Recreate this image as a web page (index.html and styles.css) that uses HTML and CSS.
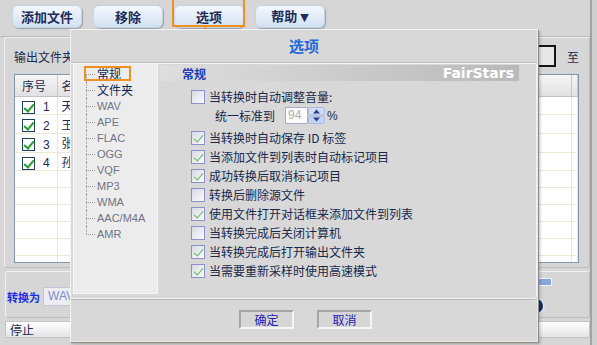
FILE: index.html
```html
<!DOCTYPE html>
<html>
<head>
  <meta charset="utf-8">
  <title>选项</title>
  <link rel="stylesheet" href="styles.css">
</head>
<body>
  <div class="app">
    <div class="toolbar">
      <button class="tb-btn">添加文件</button>
      <button class="tb-btn">移除</button>
      <button class="tb-btn">选项</button>
      <button class="tb-btn">帮助 <span class="caret">▼</span></button>
    </div>

    <div class="out-panel">
      <div class="out-row">
        <span>输出文件夹</span>
        <span class="spacer"></span>
        <span class="out-box"></span>
        <span>至</span>
      </div>
      <div class="list">
        <table>
          <colgroup>
            <col style="width:42px">
            <col>
            <col style="width:6px">
          </colgroup>
          <thead>
            <tr><th>序号</th><th class="name">名称</th><th></th></tr>
          </thead>
          <tbody>
            <tr><td><span class="lcb"></span><span class="num">1</span></td><td class="name">天使</td><td></td></tr>
            <tr><td><span class="lcb"></span><span class="num">2</span></td><td class="name">王菲</td><td></td></tr>
            <tr><td><span class="lcb"></span><span class="num">3</span></td><td class="name">张学友</td><td></td></tr>
            <tr><td><span class="lcb"></span><span class="num">4</span></td><td class="name">孙燕姿</td><td></td></tr>
            <tr><td></td><td></td><td></td></tr>
            <tr><td></td><td></td><td></td></tr>
            <tr><td></td><td></td><td></td></tr>
            <tr><td></td><td></td><td></td></tr>
            <tr><td></td><td></td><td></td></tr>
            <tr><td></td><td></td><td></td></tr>
          </tbody>
        </table>
      </div>
    </div>

    <div class="convert-panel">
      <span class="convert-label">转换为</span>
      <span class="format-box">WAV</span>
      <div class="conv-right">
        <span class="progress"></span>
        <span class="round-btn"></span>
      </div>
    </div>

    <div class="statusbar">停止</div>
  </div>

  <div class="mark-btn"></div>
  <svg class="arrow" width="30" height="40" viewBox="195 22 30 40">
    <path d="M205 27 L212 56" stroke="#f08c20" stroke-width="2" fill="none"/>
    <path d="M207.5 49 L212 57 L217 48" stroke="#f08c20" stroke-width="2" fill="none"/>
  </svg>

  <div class="dialog">
    <div class="dlg-title">选项</div>

    <div class="dlg-body">
      <div class="tree">
        <ul>
          <li class="zh"><span class="mark-item"></span>常规</li>
          <li class="zh">文件夹</li>
          <li>WAV</li>
          <li>APE</li>
          <li>FLAC</li>
          <li>OGG</li>
          <li>VQF</li>
          <li>MP3</li>
          <li>WMA</li>
          <li>AAC/M4A</li>
          <li>AMR</li>
        </ul>
      </div>

      <div class="pane">
        <div class="pane-head">
          <span class="pane-title">常规</span>
          <span class="brand">FairStars</span>
        </div>
        <div class="opts">
          <div class="opt"><span class="cb"></span>当转换时自动调整音量:</div>
          <div class="opt sub">
            统一标准到
            <span class="num-input">94</span>
            <svg class="spin" width="17" height="17" viewBox="0 0 17 17">
              <rect x="0.5" y="0.5" width="16" height="7.5" rx="2" fill="#cfdcf5" stroke="#a9b8de"/>
              <rect x="0.5" y="9" width="16" height="7.5" rx="2" fill="#c3d3f2" stroke="#a9b8de"/>
              <path d="M5 6.5h7l-3.5-4z" fill="#2d3c90"/>
              <path d="M5 10.5h7l-3.5 4z" fill="#2d3c90"/>
            </svg>
            <span class="pct">%</span>
          </div>
          <div class="opt"><span class="cb on"></span>当转换时自动保存 ID 标签</div>
          <div class="opt"><span class="cb on"></span>当添加文件到列表时自动标记项目</div>
          <div class="opt"><span class="cb on"></span>成功转换后取消标记项目</div>
          <div class="opt"><span class="cb"></span>转换后删除源文件</div>
          <div class="opt"><span class="cb on"></span>使用文件打开对话框来添加文件到列表</div>
          <div class="opt"><span class="cb"></span>当转换完成后关闭计算机</div>
          <div class="opt"><span class="cb on"></span>当转换完成后打开输出文件夹</div>
          <div class="opt"><span class="cb on"></span>当需要重新采样时使用高速模式</div>
        </div>
      </div>
    </div>

    <div class="dlg-foot">
      <button class="dlg-btn">确定</button>
      <button class="dlg-btn">取消</button>
    </div>
  </div>
</body>
</html>
```

FILE: styles.css
```css
* {
  box-sizing: border-box;
}
body {
  margin: 0;
  width: 597px;
  height: 345px;
  overflow: hidden;
  position: relative;
  background-color: #cecece;
  font-family: "Liberation Sans", "Noto Sans CJK SC", sans-serif;
  font-size: 12px;
  color: #1b2a4e;
}
button {
  font-family: "Noto Sans CJK SC", sans-serif;
  cursor: pointer;
}

/* main window */
.app {
  width: 592px;
  height: 345px;
  display: flex;
  flex-direction: column;
  background-color: #d6d6d6;
  border-right: 2px solid #a3a3a3;
}
.toolbar {
  height: 37px;
  flex: none;
  display: flex;
  gap: 11px;
  padding: 5px 0 0 12px;
  border-bottom: 1px solid #b9b9b9;
}
.tb-btn {
  width: 70px;
  height: 23px;
  padding: 0;
  border: 1px solid #c6d3e2;
  border-radius: 6px;
  background: linear-gradient(#f3f8fd, #d2e1f2);
  box-shadow: 1px 1px 1px #98a2ae;
  font-size: 13px;
  font-weight: bold;
  color: #1c2b57;
  line-height: 20px;
}
.caret {
  font-family: "DejaVu Sans", sans-serif;
  font-size: 11px;
}
.mark-btn {
  position: absolute;
  left: 172px;
  top: -2px;
  width: 73px;
  height: 29px;
  border: 2px solid #f0901f;
}
.arrow {
  position: absolute;
  left: 195px;
  top: 22px;
}

.out-panel {
  height: 231px;
  flex: none;
  margin: 0 0 3px 4px;
  padding: 0 10px 0 9px;
  border: 1px solid #f0f0f0;
  border-right-color: #bdbdbd;
  border-bottom-color: #bdbdbd;
  border-radius: 3px;
}
.out-row {
  height: 36px;
  display: flex;
  align-items: center;
  font-family: "Noto Sans CJK SC", sans-serif;
}
.spacer {
  flex: 1;
}
.out-box {
  width: 19px;
  height: 22px;
  margin-right: 11px;
  border: 2px solid #151515;
  background-color: #e8e8e8;
}
.list {
  height: 189px;
  border: 1px solid #8196ad;
  background-color: #fff;
  overflow: hidden;
}
table {
  width: 100%;
  border-collapse: collapse;
  table-layout: fixed;
}
th {
  height: 21px;
  padding: 0 0 0 7px;
  background: linear-gradient(#f6f6f6, #e1e1e1);
  border-right: 1px solid #c9c9c9;
  border-bottom: 1px solid #c2c2c2;
  font-family: "Noto Sans CJK SC", sans-serif;
  font-weight: normal;
  text-align: left;
}
td {
  height: 17px;
  padding: 0 0 0 7px;
  border-right: 1px solid #ece8d6;
  border-bottom: 1px solid #ece8d6;
  font-family: "Noto Sans CJK SC", sans-serif;
  white-space: nowrap;
  overflow: hidden;
}
th.name, td.name {
  padding-left: 4px;
}
.lcb {
  display: inline-block;
  vertical-align: middle;
  position: relative;
  width: 13px;
  height: 13px;
  border: 1px solid #20405f;
  background-color: #fff;
}
.lcb::after {
  content: "";
  position: absolute;
  left: 3px;
  top: 0;
  width: 4px;
  height: 8px;
  border: solid #27a02b;
  border-width: 0 2px 2px 0;
  transform: rotate(40deg);
}
.num {
  display: inline-block;
  vertical-align: middle;
  margin-left: 8px;
  font-family: "Liberation Sans", sans-serif;
}

.convert-panel {
  height: 47px;
  flex: none;
  margin: 0 0 3px 5px;
  display: flex;
  align-items: center;
  padding: 4px 0 0 1px;
  border: 1px solid #f0f0f0;
  border-right-color: #bdbdbd;
  border-bottom-color: #bdbdbd;
  border-radius: 3px;
}
.convert-label {
  font-family: "Noto Sans CJK SC", sans-serif;
  font-size: 11px;
  font-weight: bold;
  color: #1f2fe0;
}
.format-box {
  width: 60px;
  height: 19px;
  margin-left: 3px;
  padding-left: 4px;
  border: 1px solid #c6c6d6;
  background-color: #ececf3;
  color: #7d8cc6;
  line-height: 17px;
}
.conv-right {
  margin-left: auto;
  margin-right: 37px;
  display: flex;
  flex-direction: column;
  align-items: flex-end;
  gap: 11px;
  align-self: flex-start;
  padding-top: 2px;
}
.progress {
  width: 200px;
  height: 8px;
  border: 1px solid #f4f6fb;
  background-color: #89a6dc;
}
.round-btn {
  width: 18px;
  height: 18px;
  margin-right: 7px;
  border-radius: 50%;
  border: 2px solid #d4e2f4;
  background-color: #1d2c58;
}
.statusbar {
  height: 17px;
  flex: none;
  margin-left: 5px;
  padding-left: 4px;
  border: 1px solid #c4c4c4;
  background: linear-gradient(#fff, #e4e4e4);
  font-family: "Noto Sans CJK SC", sans-serif;
  line-height: 15px;
}

/* options dialog */
.dialog {
  position: absolute;
  left: 70px;
  top: 29px;
  width: 468px;
  height: 313px;
  display: flex;
  flex-direction: column;
  background-color: #d8d8d8;
  border: 1px solid #f4f4f4;
  border-right-color: #eeecd9;
  border-bottom-color: #eeecd9;
  box-shadow: 1px 1px 0 #8a8a8a, 2px 2px 3px rgba(0,0,0,0.25);
}
.dlg-title {
  height: 33px;
  flex: none;
  text-align: center;
  line-height: 31px;
  font-family: "Noto Sans CJK SC", sans-serif;
  font-size: 15px;
  font-weight: bold;
  color: #1f6ad9;
  border-bottom: 1px solid #bdbdbd;
  box-shadow: 0 1px 0 #f4f4f4;
}
.dlg-body {
  height: 236px;
  flex: none;
  display: flex;
  padding: 0 0 4px 2px;
  border-right: 1px solid #f2f2f2;
  border-bottom: 1px solid #f2f2f2;
  border-radius: 0 0 4px 0;
  box-shadow: 0 1px 0 #b5b5b5;
}
.tree {
  width: 85px;
  flex: none;
  padding-top: 2px;
  background-color: #ececec;
  border: 1px solid #f6f6f6;
}
.tree ul {
  list-style: none;
  margin: 0 0 0 12px;
  padding: 0;
}
.tree li {
  position: relative;
  height: 16px;
  line-height: 16px;
  padding-left: 11px;
  font-size: 11px;
  color: #6e7586;
}
.tree li.zh {
  font-family: "Noto Sans CJK SC", sans-serif;
  font-size: 12px;
  color: #132550;
}
.tree li::before {
  content: "";
  position: absolute;
  left: 0;
  top: 8px;
  width: 9px;
  border-top: 1px dotted #9a9a9a;
}
.tree li::after {
  content: "";
  position: absolute;
  left: 0;
  top: 0;
  height: 16px;
  border-left: 1px dotted #9a9a9a;
}
.tree li:first-child::after {
  top: 8px;
  height: 8px;
}
.tree li:last-child::after {
  height: 8px;
}
.mark-item {
  position: absolute;
  left: -2px;
  top: 0;
  width: 47px;
  height: 15px;
  border: 2px solid #f0901f;
}
.pane {
  flex: 1;
  padding: 2px 0 0 2px;
}
.pane-head {
  height: 16px;
  margin-right: 17px;
  padding: 0 5px 0 22px;
  display: flex;
  align-items: center;
  justify-content: space-between;
  background: linear-gradient(to right, #dedede, #b9b9b9);
}
.pane-title {
  font-family: "Noto Sans CJK SC", sans-serif;
  font-weight: bold;
  color: #1a3db4;
}
.brand {
  font-family: "DejaVu Sans", sans-serif;
  font-size: 14px;
  font-weight: bold;
  color: #fff;
  line-height: 16px;
}
.opts {
  margin: 6px 0 0 31px;
}
.opt {
  height: 19px;
  display: flex;
  align-items: center;
  gap: 4px;
  white-space: nowrap;
  font-family: "Noto Sans CJK SC", sans-serif;
  color: #17284c;
}
.opt.sub {
  gap: 0;
  padding-left: 24px;
  margin-bottom: 3px;
}
.cb {
  position: relative;
  flex: none;
  width: 14px;
  height: 14px;
  border: 1px solid #8d8fca;
  background: linear-gradient(135deg, #d9d9e4, #fbfbfb);
}
.cb.on::after {
  content: "";
  position: absolute;
  left: 4px;
  top: 1px;
  width: 4px;
  height: 8px;
  border: solid #5cb95c;
  border-width: 0 1.5px 1.5px 0;
  transform: rotate(40deg);
}
.num-input {
  width: 23px;
  height: 17px;
  margin-left: 10px;
  padding-left: 2px;
  border: 1px solid #a9adc3;
  background-color: #fbfbfb;
  color: #b0b0b0;
  font-family: "Liberation Sans", sans-serif;
  line-height: 15px;
}
.spin {
  flex: none;
}
.pct {
  margin-left: 2px;
  font-family: "Liberation Sans", sans-serif;
}
.dlg-foot {
  flex: 1;
  display: flex;
  justify-content: center;
  gap: 23px;
  padding: 11px 0 0 3px;
}
.dlg-btn {
  width: 55px;
  height: 19px;
  padding: 0;
  border: 2px solid;
  border-color: #a5a5a5 #f6f6f6 #f6f6f6 #a5a5a5;
  background-color: #d6d6d6;
  color: #1c1cb4;
  font-size: 12px;
  line-height: 15px;
}
```
